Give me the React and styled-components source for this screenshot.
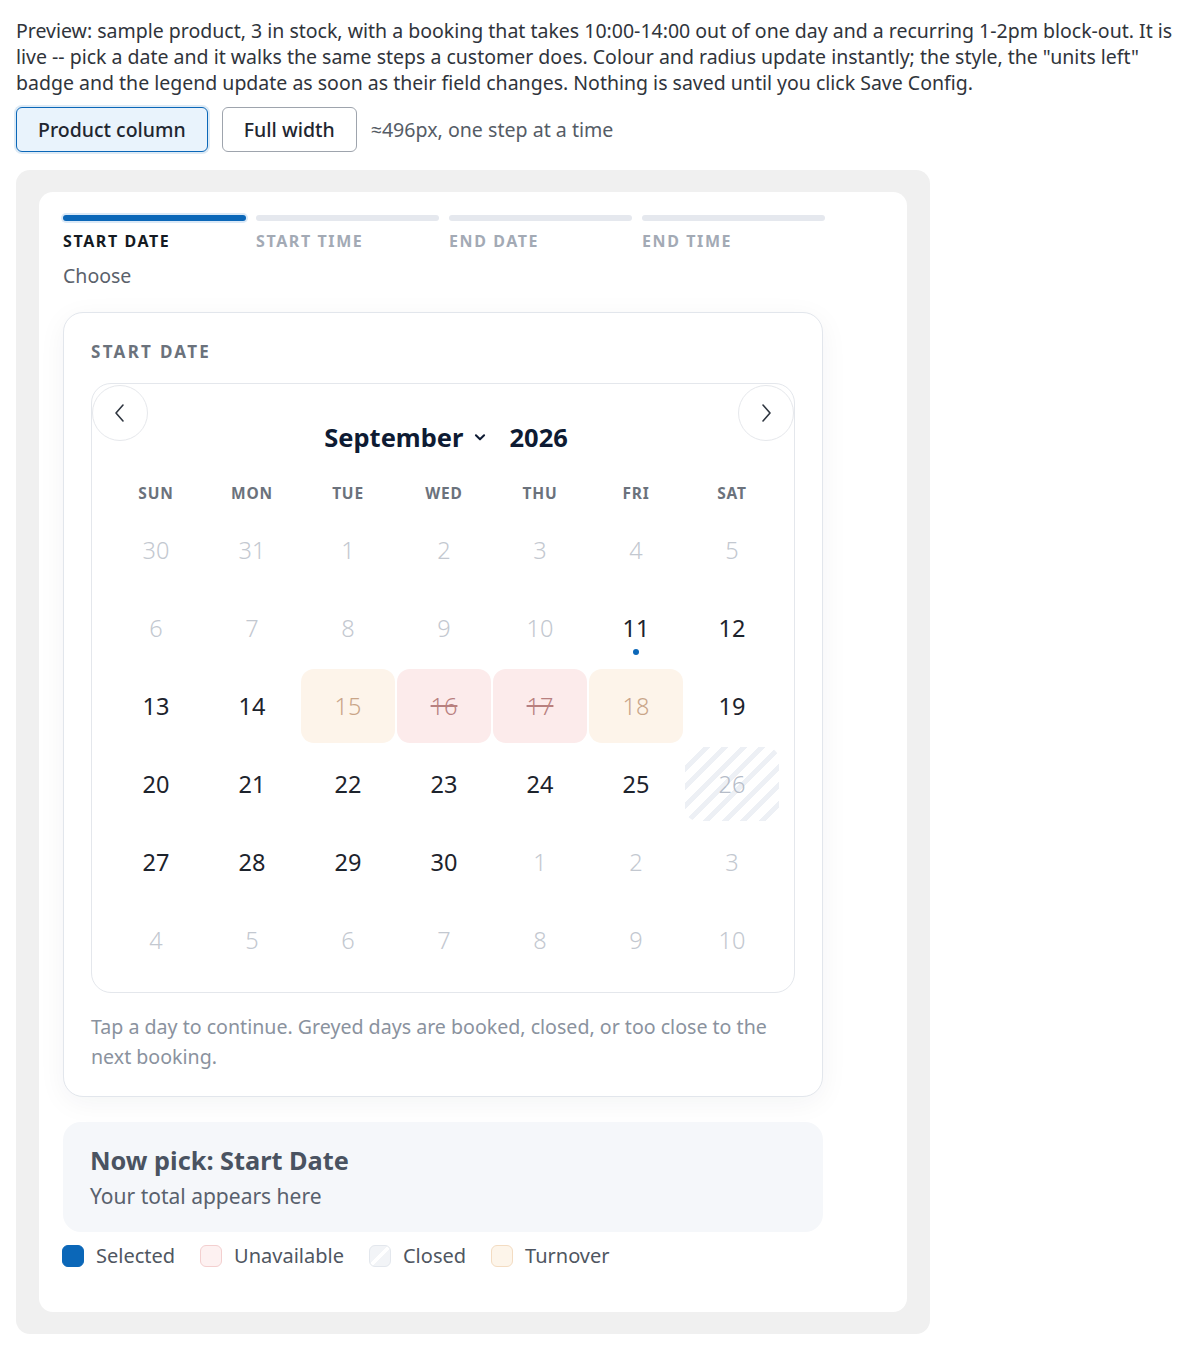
import styled, { createGlobalStyle } from 'styled-components'

const GlobalStyle = createGlobalStyle`
    * { box-sizing: border-box; }
    body {
        margin: 0;
        padding: 18px 16px;
        background: #ffffff;
        font-family: "Noto Sans", "Open Sans", sans-serif;
        color: #2b2f36;
    }
`

const blue = '#0b67b8'

const Intro = styled.p`
    margin: 0 0 11px;
    font-size: 19.5px;
    line-height: 26px;
    color: #30343b;
`
const Toolbar = styled.div`
    display: flex;
    align-items: center;
    gap: 14px;
    margin-bottom: 18px;
`
const ModeButton = styled.button`
    height: 45px;
    padding: 0 21px;
    font-family: inherit;
    font-size: 19.5px;
    font-weight: 500;
    color: #1f2630;
    border-radius: 6px;
    cursor: pointer;
    background: ${p => (p.$active ? '#e9f3fc' : '#ffffff')};
    border: ${p => (p.$active ? `1.5px solid ${blue}` : '1px solid #9ea4ad')};
    box-shadow: ${p => (p.$active ? '0 0 0 2px rgba(11, 103, 184, 0.14)' : 'none')};
`
const Hint = styled.span`
    font-size: 19.6px;
    color: #555c66;
`
const Stage = styled.div`
    width: 914px;
    background: #f0f0f0;
    border-radius: 14px;
    padding: 22px 23px;
`
const Card = styled.div`
    background: #ffffff;
    border-radius: 14px;
    padding: 23px 24px 45px;
`
const Column = styled.div`
    width: 762px;
`
const Steps = styled.div`
    display: grid;
    grid-template-columns: repeat(4, 1fr);
    column-gap: 10px;
`
const Step = styled.div`
    display: flex;
    flex-direction: column;
    gap: 10px;
`
const Bar = styled.div`
    height: 6px;
    border-radius: 3px;
    background: ${p => (p.$active ? blue : '#e5e8ee')};
    box-shadow: ${p => (p.$active ? '0 0 0 2px #dbe9f7' : 'none')};
`
const StepLabel = styled.div`
    font-size: 16px;
    line-height: 20px;
    font-weight: 700;
    letter-spacing: 1.6px;
    color: ${p => (p.$active ? '#141a22' : '#a3aab5')};
`
const Choose = styled.div`
    margin: 12px 0 23px;
    font-size: 19.5px;
    line-height: 26px;
    color: #5a616b;
`
const Panel = styled.div`
    width: 760px;
    background: #ffffff;
    border: 1px solid #e2e6ec;
    border-radius: 20px;
    padding: 28px 27px 24px;
    box-shadow: 0 6px 28px rgba(20, 30, 50, 0.05);
`
const PanelLabel = styled.div`
    font-size: 17px;
    line-height: 22px;
    font-weight: 700;
    letter-spacing: 2.3px;
    color: #6b727c;
    margin-bottom: 20px;
`
const CalendarBox = styled.div`
    position: relative;
    border: 1px solid #e4e7ec;
    border-radius: 20px;
    padding: 37px 15px 15px 17px;
`
const NavButton = styled.button`
    position: absolute;
    top: 1px;
    ${p => (p.$side === 'left' ? 'left: 0;' : 'right: 0;')}
    width: 56px;
    height: 56px;
    border-radius: 50%;
    border: 1px solid #e6e8ec;
    background: #ffffff;
    display: flex;
    align-items: center;
    justify-content: center;
    padding: 0;
    cursor: pointer;
`
const MonthHeader = styled.div`
    display: flex;
    justify-content: center;
    align-items: center;
    gap: 8px;
    font-size: 25.5px;
    line-height: 32px;
    font-weight: 700;
    color: #0e1b33;
    margin-bottom: 30px;
    padding-left: 4px;
`
const MonthName = styled.span`
    display: inline-flex;
    align-items: center;
    gap: 10px;
    margin-right: 14px;
`
const Weekdays = styled.div`
    display: grid;
    grid-template-columns: repeat(7, 1fr);
    column-gap: 2px;
    margin-bottom: 10px;
`
const Weekday = styled.div`
    text-align: center;
    font-size: 15.5px;
    line-height: 20px;
    font-weight: 700;
    letter-spacing: 0.8px;
    color: #6b727c;
`
const Days = styled.div`
    display: grid;
    grid-template-columns: repeat(7, 1fr);
    grid-auto-rows: 74px;
    gap: 4px 2px;
`
const cellBg = {
    normal: 'transparent',
    muted: 'transparent',
    turnover: '#fdf4ea',
    unavailable: '#fcebeb',
    closed: 'repeating-linear-gradient(135deg, #edf0f5 0 5px, #ffffff 5px 13px)',
}
const cellColor = {
    normal: '#1d232c',
    muted: '#c3c8d0',
    turnover: '#c9a588',
    unavailable: '#b8807f',
    closed: '#b5bcc8',
}
const Day = styled.div`
    position: relative;
    display: flex;
    align-items: center;
    justify-content: center;
    border-radius: 13px;
    font-size: 23.5px;
    font-weight: ${p => (p.$kind === 'normal' ? 400 : 300)};
    color: ${p => cellColor[p.$kind]};
    background: ${p => cellBg[p.$kind]};
    text-decoration: ${p => (p.$kind === 'unavailable' ? 'line-through' : 'none')};
`
const TodayDot = styled.span`
    position: absolute;
    left: 50%;
    top: 58px;
    width: 6px;
    height: 6px;
    margin-left: -3px;
    border-radius: 50%;
    background: ${blue};
`
const HelpText = styled.p`
    margin: 19px 0 0;
    font-size: 19.6px;
    line-height: 30px;
    color: #8a929e;
`
const Summary = styled.div`
    width: 760px;
    margin-top: 25px;
    background: #f5f7fa;
    border-radius: 18px;
    padding: 22px 27px 21px;
`
const SummaryTitle = styled.div`
    font-size: 25.3px;
    line-height: 33px;
    font-weight: 700;
    color: #4a5361;
    margin-bottom: 5px;
`
const SummaryText = styled.div`
    font-size: 21px;
    line-height: 29px;
    color: #59616d;
`
const Legend = styled.div`
    display: flex;
    align-items: center;
    gap: 25px;
    margin-top: 13px;
    margin-left: -1px;
`
const LegendItem = styled.div`
    display: flex;
    align-items: center;
    gap: 12px;
    font-size: 20px;
    line-height: 22px;
    color: #4f5661;
`
const swatch = {
    selected: `background: ${blue}; border: 1px solid ${blue};`,
    unavailable: 'background: #fdf1f1; border: 1px solid #f3cfcf;',
    closed: 'background: linear-gradient(135deg, #f2f4f7 0 44%, #ffffff 44% 56%, #f2f4f7 56%); border: 1px solid #e3e7ed;',
    turnover: 'background: #fdf5ea; border: 1px solid #f3dcc2;',
}
const Swatch = styled.span`
    width: 22px;
    height: 22px;
    border-radius: 6px;
    ${p => swatch[p.$kind]}
`

const steps = ['START DATE', 'START TIME', 'END DATE', 'END TIME']
const weekdays = ['SUN', 'MON', 'TUE', 'WED', 'THU', 'FRI', 'SAT']

const special = { 15: 'turnover', 16: 'unavailable', 17: 'unavailable', 18: 'turnover', 26: 'closed' }

function buildDays() {
    const days = [{ n: 30, kind: 'muted' }, { n: 31, kind: 'muted' }]
    for (let n = 1; n <= 30; n++) {
        let kind = n < 11 ? 'muted' : special[n] || 'normal'
        days.push({ n, kind, today: n === 11 })
    }
    for (let n = 1; n <= 10; n++) days.push({ n, kind: 'muted' })
    return days
}

function Chevron({ dir }) {
    return (
        <svg width="24" height="24" viewBox="0 0 24 24" fill="none" stroke="#2f3640" strokeWidth="1.6" strokeLinecap="round" strokeLinejoin="round">
            {dir === 'left' ? <path d="M15 4 L8 12 L15 20" /> : <path d="M9 4 L16 12 L9 20" />}
        </svg>
    )
}

export default function App() {
    const days = buildDays()
    return (
        <>
            <GlobalStyle />
            <Intro>
                Preview: sample product, 3 in stock, with a booking that takes 10:00-14:00 out of one day and a recurring 1-2pm block-out. It is live -- pick a date and it walks the same steps a customer does. Colour and radius update instantly; the style, the "units left" badge and the legend update as soon as their field changes. Nothing is saved until you click Save Config.
            </Intro>
            <Toolbar>
                <ModeButton $active>Product column</ModeButton>
                <ModeButton>Full width</ModeButton>
                <Hint>≈496px, one step at a time</Hint>
            </Toolbar>
            <Stage>
                <Card>
                    <Column>
                        <Steps>
                            {steps.map((s, i) => (
                                <Step key={s}>
                                    <Bar $active={i === 0} />
                                    <StepLabel $active={i === 0}>{s}</StepLabel>
                                </Step>
                            ))}
                        </Steps>
                        <Choose>Choose</Choose>
                        <Panel>
                            <PanelLabel>START DATE</PanelLabel>
                            <CalendarBox>
                                <NavButton $side="left" aria-label="Previous month"><Chevron dir="left" /></NavButton>
                                <NavButton $side="right" aria-label="Next month"><Chevron dir="right" /></NavButton>
                                <MonthHeader>
                                    <MonthName>
                                        September
                                        <svg width="14" height="14" viewBox="0 0 24 24" fill="none" stroke="#0e1b33" strokeWidth="3.5" strokeLinecap="round" strokeLinejoin="round">
                                            <path d="M5 9 L12 16 L19 9" />
                                        </svg>
                                    </MonthName>
                                    2026
                                </MonthHeader>
                                <Weekdays>
                                    {weekdays.map(w => <Weekday key={w}>{w}</Weekday>)}
                                </Weekdays>
                                <Days>
                                    {days.map((d, i) => (
                                        <Day key={i} $kind={d.kind}>
                                            {d.n}
                                            {d.today && <TodayDot />}
                                        </Day>
                                    ))}
                                </Days>
                            </CalendarBox>
                            <HelpText>Tap a day to continue. Greyed days are booked, closed, or too close to the next booking.</HelpText>
                        </Panel>
                        <Summary>
                            <SummaryTitle>Now pick: Start Date</SummaryTitle>
                            <SummaryText>Your total appears here</SummaryText>
                        </Summary>
                        <Legend>
                            <LegendItem><Swatch $kind="selected" />Selected</LegendItem>
                            <LegendItem><Swatch $kind="unavailable" />Unavailable</LegendItem>
                            <LegendItem><Swatch $kind="closed" />Closed</LegendItem>
                            <LegendItem><Swatch $kind="turnover" />Turnover</LegendItem>
                        </Legend>
                    </Column>
                </Card>
            </Stage>
        </>
    )
}
